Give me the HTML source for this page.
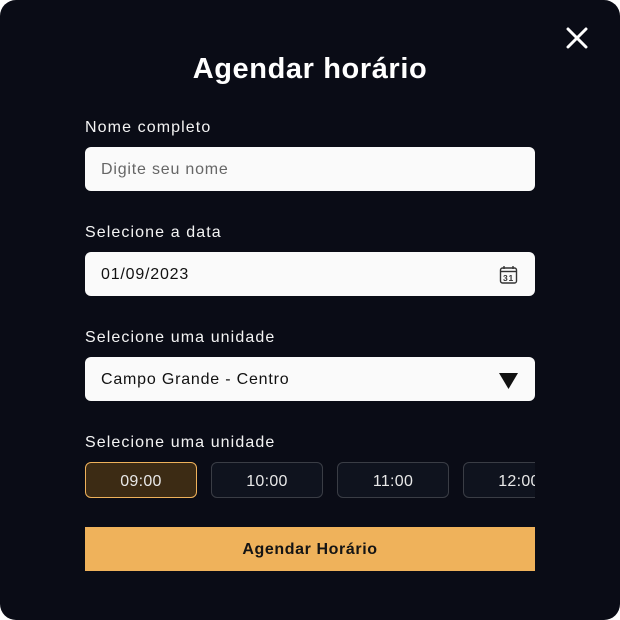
<!DOCTYPE html>
<html><head><meta charset="utf-8"><style>
*{margin:0;padding:0;box-sizing:border-box}
html,body{width:620px;height:620px;background:#fff;overflow:hidden}
body{font-family:"Liberation Sans",sans-serif}
.m{position:absolute;left:0;top:0;width:620px;height:620px;background:#0a0c16;border-radius:16px}
.t{position:absolute;top:53px;left:0;width:620px;text-align:center;color:#fff;font-size:29px;font-weight:bold;letter-spacing:0.6px}
.l{position:absolute;left:85px;color:#f4f4f4;font-size:16px;letter-spacing:1.1px}
.i{position:absolute;left:85px;width:450px;height:44px;background:#fafafa;border-radius:6px;font-size:16px;padding-left:16px;line-height:46px;color:#111;letter-spacing:0.8px}
.s{position:absolute;top:462px;width:112px;height:36px;border:1px solid #3a3d45;background:#0f131e;border-radius:6px;color:#e8e8e8;font-size:16px;text-align:center;line-height:37px;letter-spacing:0.3px}
.clip{position:absolute;left:85px;top:455px;width:450px;height:50px;overflow:hidden}
.b{position:absolute;left:85px;top:527px;width:450px;height:44px;background:#efb25b;color:#141414;font-weight:bold;font-size:16px;text-align:center;line-height:46px;letter-spacing:0.6px}
</style></head><body><div class="m">
<svg style="position:absolute;left:566px;top:27px" width="22" height="22" viewBox="0 0 22 22"><path d="M2 2L20 20M20 2L2 20" stroke="#fff" stroke-width="3" stroke-linecap="round"/></svg>
<div class="t">Agendar horário</div>
<div class="l" style="top:119px">Nome completo</div>
<div class="i" style="top:147px;color:#666">Digite seu nome</div>
<div class="l" style="top:224px">Selecione a data</div>
<div class="i" style="top:252px">01/09/2023
<svg style="position:absolute;left:414px;top:13px" width="19" height="19" viewBox="0 0 19 19"><rect x="1.5" y="3" width="16" height="15" rx="2" fill="none" stroke="#333" stroke-width="1.4"/><line x1="1.5" y1="6.5" x2="17.5" y2="6.5" stroke="#333" stroke-width="1.4"/><line x1="5" y1="1" x2="5" y2="4" stroke="#333" stroke-width="1.4"/><line x1="14" y1="1" x2="14" y2="4" stroke="#333" stroke-width="1.4"/><text x="9.5" y="16" text-anchor="middle" font-size="8.5" font-weight="bold" font-family="Liberation Sans" fill="#333">31</text></svg></div>
<div class="l" style="top:329px">Selecione uma unidade</div>
<div class="i" style="top:357px">Campo Grande - Centro
<svg style="position:absolute;left:414px;top:16px" width="19" height="16" viewBox="0 0 19 16"><path d="M0 0H19L9.5 16Z" fill="#111"/></svg></div>
<div class="l" style="top:434px">Selecione uma unidade</div>
<div class="clip">
<div class="s" style="left:0;top:7px;background:#3c2b14;border-color:#efb25b">09:00</div>
<div class="s" style="left:126px;top:7px">10:00</div>
<div class="s" style="left:252px;top:7px">11:00</div>
<div class="s" style="left:378px;top:7px">12:00</div>
</div>
<div class="b">Agendar Horário</div>
</div></body></html>
